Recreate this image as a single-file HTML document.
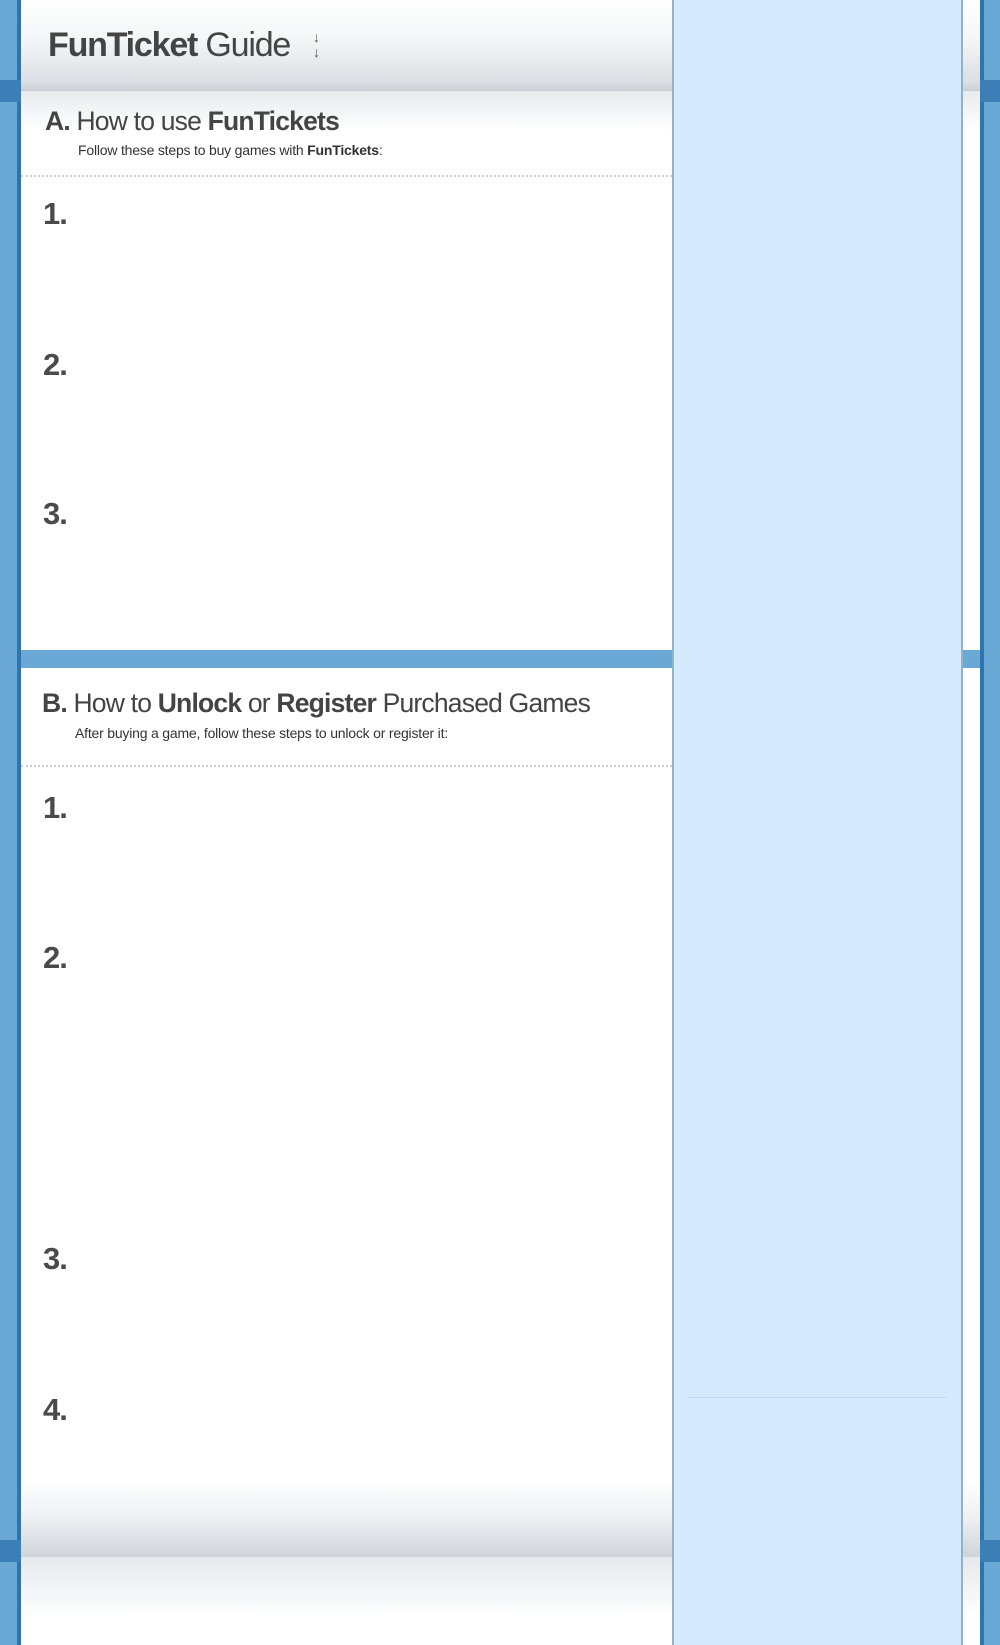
<!DOCTYPE html>
<html><head><meta charset="utf-8"><style>
body{margin:0;width:1000px;height:1645px;position:relative;overflow:hidden;background:#6aa8d6;font-family:"Liberation Sans",sans-serif;color:#444}
.abs{position:absolute}
.edge{background:#2f74ad}
.panel{position:absolute;left:21px;width:959px;background:#fff}
.hdrband{background:linear-gradient(#fff 0%,#f6f7f8 40%,#dcdfe3 90%,#c9ced4 100%)}
.subband{background:linear-gradient(#e8eaed,#fff)}
.dot{position:absolute;left:21px;width:651px;border-top:2px dotted #ccc}
.num{position:absolute;left:43px;font-size:31px;font-weight:bold;color:#4a4a4a;letter-spacing:-1px}
</style></head><body>
<div class="abs edge" style="left:17px;top:0;width:4px;height:1645px"></div>
<div class="abs edge" style="left:980px;top:0;width:4px;height:1645px"></div>
<div class="abs" style="left:0;top:80px;width:21px;height:22px;background:#3b7fb6"></div>
<div class="abs" style="left:980px;top:80px;width:20px;height:22px;background:#3b7fb6"></div>
<div class="abs" style="left:0;top:1540px;width:21px;height:22px;background:#3b7fb6"></div>
<div class="abs" style="left:980px;top:1540px;width:20px;height:22px;background:#3b7fb6"></div>

<div class="panel" style="top:0;height:650px"></div>
<div class="panel hdrband" style="top:0;height:91px"></div>
<div class="panel subband" style="top:91px;height:40px"></div>
<div class="panel" style="top:668px;height:977px"></div>
<div class="panel" style="top:1480px;height:77px;background:linear-gradient(#fff,#eef0f2 50%,#cfd4da)"></div>
<div class="panel" style="top:1557px;height:88px;background:linear-gradient(#e6e9ec,#fff 70%)"></div>

<div class="abs" style="left:672px;top:0;width:291px;height:1645px;background:#d5eafc;border-left:2px solid #8fb3cf;border-right:2px solid #8fb3cf;box-sizing:border-box"></div>
<div class="abs" style="left:688px;top:1397px;width:258px;height:1px;background:#c2d8ea"></div>

<div class="abs" style="left:48px;top:26px;font-size:34px;letter-spacing:-1.2px"><b>FunTicket</b> Guide</div>
<div class="abs" style="left:313px;top:30px;font-size:14px;line-height:15px;color:#555;font-weight:bold">↓<br>↓</div>
<div class="abs" style="left:45px;top:106px;font-size:26.5px;letter-spacing:-0.8px"><b>A.</b> How to use <b>FunTickets</b></div>
<div class="abs" style="left:78px;top:142px;font-size:14px;color:#333;letter-spacing:-0.2px">Follow these steps to buy games with <b>FunTickets</b>:</div>
<div class="dot" style="top:175px"></div>
<div class="num" style="top:196px">1.</div>
<div class="num" style="top:347px">2.</div>
<div class="num" style="top:496px">3.</div>

<div class="abs" style="left:42px;top:688px;font-size:26.5px;letter-spacing:-0.8px"><b>B.</b> How to <b>Unlock</b> or <b>Register</b> Purchased Games</div>
<div class="abs" style="left:75px;top:725px;font-size:14px;color:#333;letter-spacing:-0.2px">After buying a game, follow these steps to unlock or register it:</div>
<div class="dot" style="top:765px"></div>
<div class="num" style="top:790px">1.</div>
<div class="num" style="top:940px">2.</div>
<div class="num" style="top:1241px">3.</div>
<div class="num" style="top:1392px">4.</div>
</body></html>
